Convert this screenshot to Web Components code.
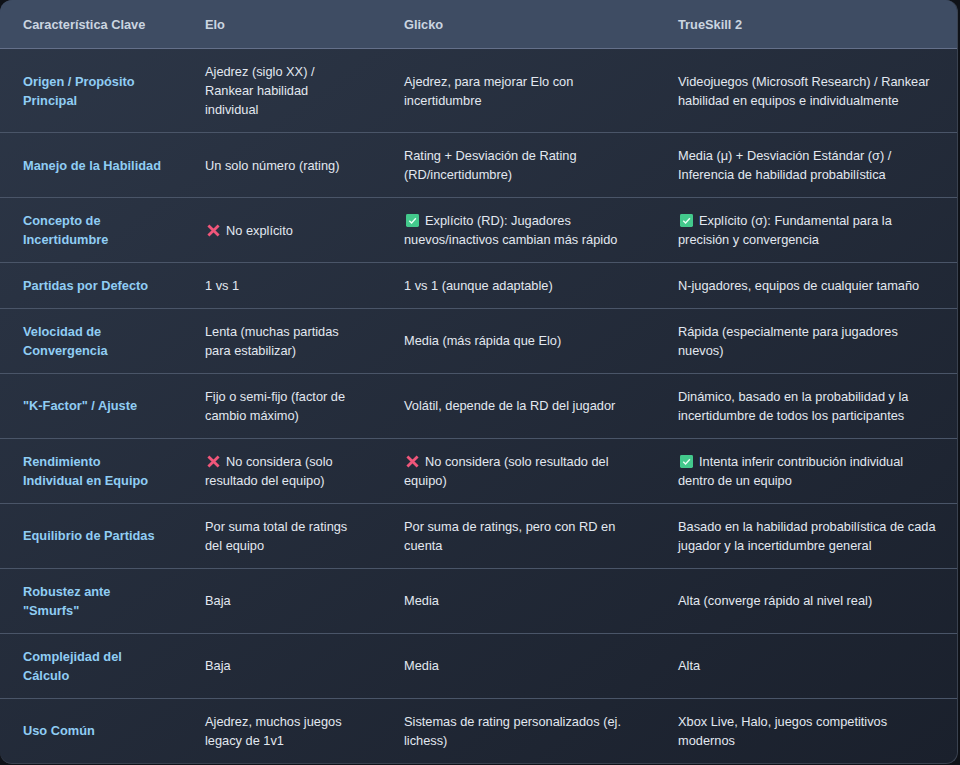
<!DOCTYPE html>
<html lang="es"><head><meta charset="utf-8"><title>Comparativa</title>
<style>
html,body{margin:0;padding:0;background:#0f1218;height:765px;overflow:hidden}
body{font-family:"Liberation Sans",Arial,sans-serif;color:#e2e8f0;font-size:12.8px}
</style></head><body>
<cmp-table>
<cmp-row head><cmp-cell>Característica Clave</cmp-cell><cmp-cell>Elo</cmp-cell><cmp-cell>Glicko</cmp-cell><cmp-cell>TrueSkill 2</cmp-cell></cmp-row>
<cmp-row><cmp-cell key>Origen / Propósito Principal</cmp-cell><cmp-cell>Ajedrez (siglo XX) / Rankear habilidad individual</cmp-cell><cmp-cell>Ajedrez, para mejorar Elo con incertidumbre</cmp-cell><cmp-cell>Videojuegos (Microsoft Research) / Rankear habilidad en equipos e individualmente</cmp-cell></cmp-row>
<cmp-row><cmp-cell key>Manejo de la Habilidad</cmp-cell><cmp-cell>Un solo número (rating)</cmp-cell><cmp-cell>Rating + Desviación de Rating (RD/incertidumbre)</cmp-cell><cmp-cell>Media (μ) + Desviación Estándar (σ) / Inferencia de habilidad probabilística</cmp-cell></cmp-row>
<cmp-row><cmp-cell key>Concepto de Incertidumbre</cmp-cell><cmp-cell><cmp-no></cmp-no>No explícito</cmp-cell><cmp-cell><cmp-yes></cmp-yes>Explícito (RD): Jugadores nuevos/inactivos cambian más rápido</cmp-cell><cmp-cell><cmp-yes></cmp-yes>Explícito (σ): Fundamental para la precisión y convergencia</cmp-cell></cmp-row>
<cmp-row><cmp-cell key>Partidas por Defecto</cmp-cell><cmp-cell>1 vs 1</cmp-cell><cmp-cell>1 vs 1 (aunque adaptable)</cmp-cell><cmp-cell>N-jugadores, equipos de cualquier tamaño</cmp-cell></cmp-row>
<cmp-row><cmp-cell key>Velocidad de Convergencia</cmp-cell><cmp-cell>Lenta (muchas partidas para estabilizar)</cmp-cell><cmp-cell lift>Media (más rápida que Elo)</cmp-cell><cmp-cell>Rápida (especialmente para jugadores nuevos)</cmp-cell></cmp-row>
<cmp-row><cmp-cell key lift>"K-Factor" / Ajuste</cmp-cell><cmp-cell>Fijo o semi-fijo (factor de cambio máximo)</cmp-cell><cmp-cell lift>Volátil, depende de la RD del jugador</cmp-cell><cmp-cell>Dinámico, basado en la probabilidad y la incertidumbre de todos los participantes</cmp-cell></cmp-row>
<cmp-row><cmp-cell key>Rendimiento Individual en Equipo</cmp-cell><cmp-cell><cmp-no></cmp-no>No considera (solo resultado del equipo)</cmp-cell><cmp-cell><cmp-no></cmp-no>No considera (solo resultado del equipo)</cmp-cell><cmp-cell><cmp-yes></cmp-yes>Intenta inferir contribución individual dentro de un equipo</cmp-cell></cmp-row>
<cmp-row><cmp-cell key lift>Equilibrio de Partidas</cmp-cell><cmp-cell>Por suma total de ratings del equipo</cmp-cell><cmp-cell>Por suma de ratings, pero con RD en cuenta</cmp-cell><cmp-cell>Basado en la habilidad probabilística de cada jugador y la incertidumbre general</cmp-cell></cmp-row>
<cmp-row><cmp-cell key>Robustez ante "Smurfs"</cmp-cell><cmp-cell lift>Baja</cmp-cell><cmp-cell lift>Media</cmp-cell><cmp-cell lift>Alta (converge rápido al nivel real)</cmp-cell></cmp-row>
<cmp-row><cmp-cell key>Complejidad del Cálculo</cmp-cell><cmp-cell lift>Baja</cmp-cell><cmp-cell lift>Media</cmp-cell><cmp-cell lift>Alta</cmp-cell></cmp-row>
<cmp-row last><cmp-cell key lift>Uso Común</cmp-cell><cmp-cell>Ajedrez, muchos juegos legacy de 1v1</cmp-cell><cmp-cell>Sistemas de rating personalizados (ej. lichess)</cmp-cell><cmp-cell>Xbox Live, Halo, juegos competitivos modernos</cmp-cell></cmp-row>
</cmp-table>
<script>
function def(name,html){customElements.define(name,class extends HTMLElement{constructor(){super();this.attachShadow({mode:'open'}).innerHTML=html;}});}
def('cmp-table',`<style>:host{display:block;width:958px;height:764px;box-sizing:border-box;border-radius:12px;overflow:hidden;background:linear-gradient(145deg,#2d3748 0%,#1a202c 100%);border:solid #3a4250;border-width:0 1px 1px 0}</style><slot></slot>`);
def('cmp-row',`<style>:host{display:grid;grid-template-columns:182px 199px 274px 302px;box-sizing:border-box;border-bottom:1px solid #4a5568;color:#e2e8f0}
:host([last]){border-bottom:0}
:host([head]){background:#3e4c63;color:#cbd5e0;font-weight:700;border-bottom-color:#64708a;height:49px}</style><slot></slot>`);
def('cmp-cell',`<style>:host{display:flex;align-items:center;box-sizing:border-box;padding:13px 20px 13px 23px;line-height:19px}
:host([key]){color:#90cdf4;font-weight:700;padding-right:19px}
:host([lift]){padding-top:12px;padding-bottom:14px}</style><div><slot></slot></div>`);
const icon=s=>`<style>:host{display:inline-block;width:13px;height:13px;margin:0 6px 0 2px;vertical-align:-2px}svg{display:block}</style><svg viewBox="0 0 14 14" width="13" height="13">${s}</svg>`;
def('cmp-no',icon(`<path d="M1.5 1.5 12.5 12.5M12.5 1.5 1.5 12.5" stroke="#f0567a" stroke-width="3" fill="none"/>`));
def('cmp-yes',icon(`<rect x="0" y="0" width="14" height="14" rx="1.5" fill="#43c98c"/><path d="M3.5 7.2 6 9.6 10.6 4.6" stroke="#eafff5" stroke-width="1.5" fill="none"/>`));
</script>
</body></html>
